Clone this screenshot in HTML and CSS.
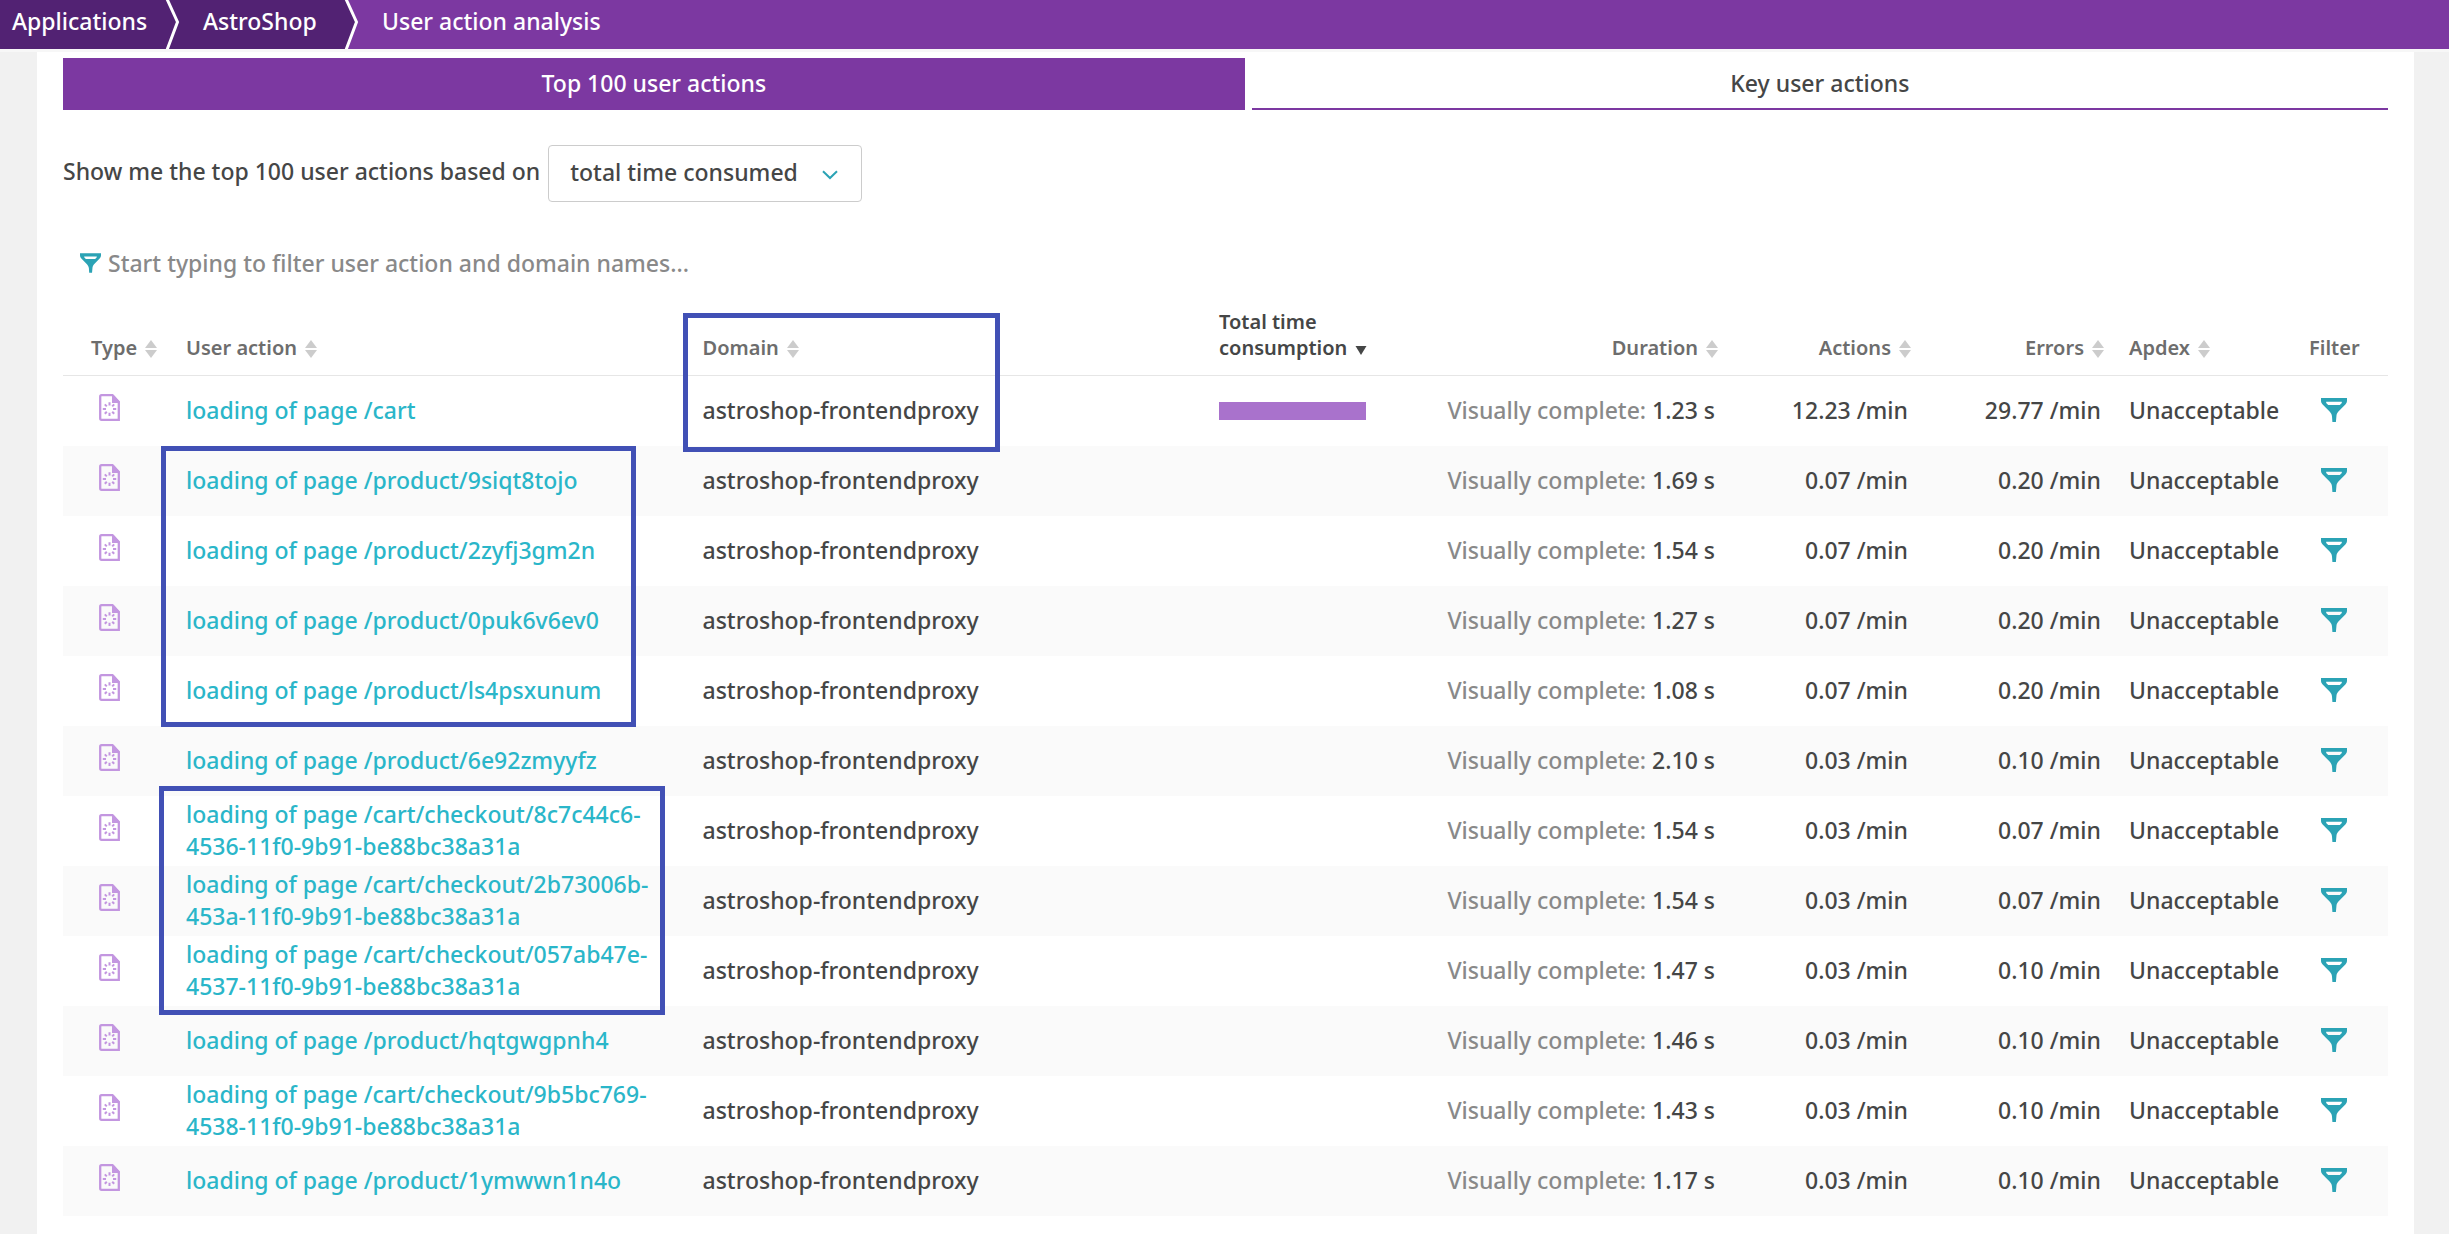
FILE: index.html
```html
<!DOCTYPE html>
<html lang="en">
<head>
<meta charset="utf-8">
<meta name="viewport" content="width=device-width, initial-scale=1">
<title>User action analysis</title>
<link rel="stylesheet" href="styles.css">
</head>
<body>
<svg class="sprite" aria-hidden="true">
  <symbol id="funnel" viewBox="0 0 26 24">
    <path fill-rule="evenodd" d="M0 0H26V2.5C26 4 25.6 5 24.6 6.2L17.4 13.6C16 15.2 15.5 16.6 15.4 18.6L14.9 24H11.4L11 18.6C10.8 16.6 10 15.2 8.6 13.6L1.4 6.2C.4 5 0 4 0 2.5ZM5.2 3.8V5L7.2 7H18.8L20.8 5V3.8Z"/>
  </symbol>
  <symbol id="page-load" viewBox="0 0 21 27">
    <path fill="none" stroke="currentColor" stroke-width="2.3" d="M2.5 1.2H13.5L19.8 8V25.8H2.5Q1.2 25.8 1.2 24.3V2.7Q1.2 1.2 2.5 1.2Z"/>
    <path fill="currentColor" d="M13 1H14.5L20.5 7.5V9H13Z"/>
    <path fill="none" stroke="currentColor" stroke-width="2" d="M10.5 8.2V11.4M10.5 18.8V22M3.8 15.1H7M14 15.1H17.2M5.8 10.4L7.8 12.4M13.2 17.8L15.2 19.8M5.8 19.8L7.8 17.8M13.2 12.4L15.2 10.4"/>
  </symbol>
  <symbol id="sort" viewBox="0 0 12 18">
    <path d="M6 0L12 8H0ZM6 18L12 10H0Z"/>
  </symbol>
</svg>

<nav class="crumbs" aria-label="Breadcrumb">
  <a class="crumb crumb-first" href="#">Applications<svg class="crumb-edge" viewBox="0 0 16 49" aria-hidden="true"><path class="edge-fill" d="M0 0H2L14 22L2 49H0Z"/><path class="edge-line" d="M2 -1L12.5 22L2 50"/></svg></a>
  <a class="crumb crumb-second" href="#">AstroShop<svg class="crumb-edge" viewBox="0 0 16 49" aria-hidden="true"><path class="edge-fill" d="M0 0H2L12 22L2 49H0Z"/><path class="edge-line" d="M2 -1L12.5 22L2 50"/></svg></a>
  <span class="crumb crumb-current">User action analysis</span>
</nav>

<main class="panel">
  <div class="tabs">
    <button class="tab tab-active" type="button">Top 100 user actions</button>
    <button class="tab" type="button">Key user actions</button>
  </div>

  <div class="basis">
    <label for="basis">Show me the top 100 user actions based on</label>
    <div class="select-box">
      <select id="basis"><option>total time consumed</option></select>
      <svg class="chevron" viewBox="0 0 16 10" aria-hidden="true"><path d="M1 1.2L8 8L15 1.2"/></svg>
    </div>
  </div>

  <div class="filter-row">
    <svg class="funnel-small" aria-hidden="true"><use href="#funnel"/></svg>
    <input type="text" aria-label="Filter user actions" placeholder="Start typing to filter user action and domain names...">
  </div>

  <table class="actions">
    <colgroup><col class="c-type"><col><col><col class="c-total"><col class="c-duration"><col class="c-rate"><col class="c-rate"><col class="c-apdex"><col class="c-filter"></colgroup>
    <thead>
      <tr>
        <th class="type"><button type="button">Type<svg class="sort"><use href="#sort"/></svg></button></th>
        <th><button type="button">User action<svg class="sort"><use href="#sort"/></svg></button></th>
        <th><button type="button">Domain<svg class="sort"><use href="#sort"/></svg></button></th>
        <th><button class="sorted" type="button"><span>Total time<br>consumption</span><svg class="sort-down" viewBox="0 0 12 9"><path d="M.5 0H11.5L6 9Z"/></svg></button></th>
        <th class="num"><button type="button">Duration<svg class="sort"><use href="#sort"/></svg></button></th>
        <th class="num"><button type="button">Actions<svg class="sort"><use href="#sort"/></svg></button></th>
        <th class="num"><button type="button">Errors<svg class="sort"><use href="#sort"/></svg></button></th>
        <th><button type="button">Apdex<svg class="sort"><use href="#sort"/></svg></button></th>
        <th>Filter</th>
      </tr>
    </thead>
    <tbody>
      <tr><td class="type"><svg class="page-load"><use href="#page-load"/></svg></td><td><a href="#">loading of page /cart</a></td><td>astroshop-frontendproxy</td><td class="share"><div class="bar"></div></td><td class="num"><span class="metric">Visually complete:</span> 1.23 s</td><td class="num">12.23 /min</td><td class="num">29.77 /min</td><td>Unacceptable</td><td class="filter"><button type="button" aria-label="Filter"><svg class="funnel"><use href="#funnel"/></svg></button></td></tr>
      <tr><td class="type"><svg class="page-load"><use href="#page-load"/></svg></td><td><a href="#">loading of page /product/9siqt8tojo</a></td><td>astroshop-frontendproxy</td><td></td><td class="num"><span class="metric">Visually complete:</span> 1.69 s</td><td class="num">0.07 /min</td><td class="num">0.20 /min</td><td>Unacceptable</td><td class="filter"><button type="button" aria-label="Filter"><svg class="funnel"><use href="#funnel"/></svg></button></td></tr>
      <tr><td class="type"><svg class="page-load"><use href="#page-load"/></svg></td><td><a href="#">loading of page /product/2zyfj3gm2n</a></td><td>astroshop-frontendproxy</td><td></td><td class="num"><span class="metric">Visually complete:</span> 1.54 s</td><td class="num">0.07 /min</td><td class="num">0.20 /min</td><td>Unacceptable</td><td class="filter"><button type="button" aria-label="Filter"><svg class="funnel"><use href="#funnel"/></svg></button></td></tr>
      <tr><td class="type"><svg class="page-load"><use href="#page-load"/></svg></td><td><a href="#">loading of page /product/0puk6v6ev0</a></td><td>astroshop-frontendproxy</td><td></td><td class="num"><span class="metric">Visually complete:</span> 1.27 s</td><td class="num">0.07 /min</td><td class="num">0.20 /min</td><td>Unacceptable</td><td class="filter"><button type="button" aria-label="Filter"><svg class="funnel"><use href="#funnel"/></svg></button></td></tr>
      <tr><td class="type"><svg class="page-load"><use href="#page-load"/></svg></td><td><a href="#">loading of page /product/ls4psxunum</a></td><td>astroshop-frontendproxy</td><td></td><td class="num"><span class="metric">Visually complete:</span> 1.08 s</td><td class="num">0.07 /min</td><td class="num">0.20 /min</td><td>Unacceptable</td><td class="filter"><button type="button" aria-label="Filter"><svg class="funnel"><use href="#funnel"/></svg></button></td></tr>
      <tr><td class="type"><svg class="page-load"><use href="#page-load"/></svg></td><td><a href="#">loading of page /product/6e92zmyyfz</a></td><td>astroshop-frontendproxy</td><td></td><td class="num"><span class="metric">Visually complete:</span> 2.10 s</td><td class="num">0.03 /min</td><td class="num">0.10 /min</td><td>Unacceptable</td><td class="filter"><button type="button" aria-label="Filter"><svg class="funnel"><use href="#funnel"/></svg></button></td></tr>
      <tr><td class="type"><svg class="page-load"><use href="#page-load"/></svg></td><td><a href="#">loading of page /cart/checkout/8c7c44c6-4536-11f0-9b91-be88bc38a31a</a></td><td>astroshop-frontendproxy</td><td></td><td class="num"><span class="metric">Visually complete:</span> 1.54 s</td><td class="num">0.03 /min</td><td class="num">0.07 /min</td><td>Unacceptable</td><td class="filter"><button type="button" aria-label="Filter"><svg class="funnel"><use href="#funnel"/></svg></button></td></tr>
      <tr><td class="type"><svg class="page-load"><use href="#page-load"/></svg></td><td><a href="#">loading of page /cart/checkout/2b73006b-453a-11f0-9b91-be88bc38a31a</a></td><td>astroshop-frontendproxy</td><td></td><td class="num"><span class="metric">Visually complete:</span> 1.54 s</td><td class="num">0.03 /min</td><td class="num">0.07 /min</td><td>Unacceptable</td><td class="filter"><button type="button" aria-label="Filter"><svg class="funnel"><use href="#funnel"/></svg></button></td></tr>
      <tr><td class="type"><svg class="page-load"><use href="#page-load"/></svg></td><td><a href="#">loading of page /cart/checkout/057ab47e-4537-11f0-9b91-be88bc38a31a</a></td><td>astroshop-frontendproxy</td><td></td><td class="num"><span class="metric">Visually complete:</span> 1.47 s</td><td class="num">0.03 /min</td><td class="num">0.10 /min</td><td>Unacceptable</td><td class="filter"><button type="button" aria-label="Filter"><svg class="funnel"><use href="#funnel"/></svg></button></td></tr>
      <tr><td class="type"><svg class="page-load"><use href="#page-load"/></svg></td><td><a href="#">loading of page /product/hqtgwgpnh4</a></td><td>astroshop-frontendproxy</td><td></td><td class="num"><span class="metric">Visually complete:</span> 1.46 s</td><td class="num">0.03 /min</td><td class="num">0.10 /min</td><td>Unacceptable</td><td class="filter"><button type="button" aria-label="Filter"><svg class="funnel"><use href="#funnel"/></svg></button></td></tr>
      <tr><td class="type"><svg class="page-load"><use href="#page-load"/></svg></td><td><a href="#">loading of page /cart/checkout/9b5bc769-4538-11f0-9b91-be88bc38a31a</a></td><td>astroshop-frontendproxy</td><td></td><td class="num"><span class="metric">Visually complete:</span> 1.43 s</td><td class="num">0.03 /min</td><td class="num">0.10 /min</td><td>Unacceptable</td><td class="filter"><button type="button" aria-label="Filter"><svg class="funnel"><use href="#funnel"/></svg></button></td></tr>
      <tr><td class="type"><svg class="page-load"><use href="#page-load"/></svg></td><td><a href="#">loading of page /product/1ymwwn1n4o</a></td><td>astroshop-frontendproxy</td><td></td><td class="num"><span class="metric">Visually complete:</span> 1.17 s</td><td class="num">0.03 /min</td><td class="num">0.10 /min</td><td>Unacceptable</td><td class="filter"><button type="button" aria-label="Filter"><svg class="funnel"><use href="#funnel"/></svg></button></td></tr>
    </tbody>
  </table>

  <div class="callout callout-domain"></div>
  <div class="callout callout-products"></div>
  <div class="callout callout-checkouts"></div>
</main>
</body>
</html>
```
FILE: styles.css
```css
* {
  box-sizing: border-box;
}

body {
  margin: 0;
  min-height: 100vh;
  display: flex;
  flex-direction: column;
  background: #f1f1f1;
  color: #454646;
  font: 500 23px/32px "Noto Sans", sans-serif;
}

button,
input,
select {
  font: inherit;
  color: inherit;
  background: none;
  border: 0;
  padding: 0;
  margin: 0;
}

a {
  color: #2ab6c9;
  text-decoration: none;
}

.sprite {
  display: none;
}

/* Breadcrumb bar */
.crumbs {
  display: flex;
  background: #7c38a1;
  border-bottom: 3px solid #f7f7f7;
  box-sizing: content-box;
  height: 49px;
}

.crumb {
  position: relative;
  padding: 5px 0 12px 26px;
  color: #fff;
}

.crumb-first,
.crumb-second {
  background: #522273;
}

.crumb-first {
  width: 165px;
  padding-left: 12px;
  z-index: 2;
}

.crumb-second {
  width: 179px;
  padding-left: 38px;
  z-index: 1;
}

.crumb-current {
  padding-left: 38px;
}

.crumb-edge {
  position: absolute;
  top: 0;
  left: 100%;
  width: 16px;
  height: 49px;
}

.edge-fill {
  fill: #522273;
}

.edge-line {
  fill: none;
  stroke: #fff;
  stroke-width: 3;
}

/* Content panel */
.panel {
  position: relative;
  flex: 1;
  margin: 0 35px 0 37px;
  padding: 6px 26px 18px;
  background: #fff;
}

.tabs {
  display: flex;
  gap: 7px;
}

.tab {
  flex: 25 1 0;
  height: 52px;
  border-bottom: 2px solid #7c38a1;
}

.tab-active {
  flex-grow: 26;
  background: #7c38a1;
  color: #fff;
}

.basis {
  display: flex;
  align-items: center;
  gap: 8px;
  margin-top: 35px;
}

.basis label {
  padding-bottom: 6px;
}

.select-box {
  position: relative;
}

.select-box select {
  appearance: none;
  width: 314px;
  height: 57px;
  padding: 0 52px 4px 21px;
  border: 1px solid #ccc;
  border-radius: 4px;
  background: #fff;
}

.chevron {
  position: absolute;
  right: 24px;
  top: 25px;
  width: 16px;
  height: 10px;
  fill: none;
  stroke: #2ba3b5;
  stroke-width: 2;
  pointer-events: none;
}

.filter-row {
  display: flex;
  align-items: center;
  gap: 7px;
  margin-top: 41px;
  padding-left: 17px;
}

.filter-row input {
  flex: 1;
  height: 40px;
  outline: 0;
}

.filter-row input::placeholder {
  color: #898989;
  opacity: 1;
}

.funnel-small {
  width: 21px;
  height: 20px;
  fill: #2ba3b5;
}

/* User action table */
.actions {
  width: 100%;
  table-layout: fixed;
  border-collapse: separate;
  border-spacing: 0;
}

.c-type { width: 109px; }
.c-total { width: 175px; }
.c-duration { width: 349px; }
.c-rate { width: 193px; }
.c-apdex { width: 180px; }
.c-filter { width: 93px; }

.actions th {
  height: 93px;
  padding: 0 0 14px 14px;
  border-bottom: 1px solid #e6e6e6;
  vertical-align: bottom;
  text-align: left;
  font-size: 20px;
  line-height: 26px;
  font-weight: 600;
  color: #6d6d6d;
}

.actions th.type {
  padding-left: 28px;
}

.actions th.num {
  padding-right: 11px;
}

.actions th button {
  display: flex;
  align-items: flex-end;
  gap: 8px;
  text-align: left;
}

.actions th.num button {
  margin-left: auto;
}

.actions th .sorted {
  color: #454646;
}

.sort {
  width: 12px;
  height: 18px;
  margin-bottom: 3px;
  fill: #ccc;
}

.sort-down {
  width: 12px;
  height: 9px;
  margin-bottom: 6px;
  fill: #454646;
}

.actions td {
  height: 70px;
  padding: 0 14px 2px;
  vertical-align: middle;
}

.actions td.type {
  padding: 0 0 7px 36px;
}

.actions td.share {
  padding-bottom: 0;
}

.actions td.num {
  text-align: right;
  white-space: nowrap;
}

.actions tbody tr:nth-child(even) {
  background: #fafafa;
}

.metric {
  color: #898989;
}

.page-load {
  display: block;
  width: 21px;
  height: 27px;
  color: #c396e0;
}

.bar {
  width: 147px;
  height: 18px;
  background: #a972cc;
}

.actions td.filter {
  padding-left: 26px;
}

.filter button,
.funnel {
  display: block;
}

.funnel {
  width: 26px;
  height: 24px;
  fill: #2ba3b5;
}

/* Highlight frames drawn over the table */
.callout {
  position: absolute;
  border: 5px solid #4150b5;
  pointer-events: none;
}

.callout-domain {
  left: 646px;
  top: 261px;
  width: 317px;
  height: 139px;
}

.callout-products {
  left: 124px;
  top: 394px;
  width: 475px;
  height: 281px;
}

.callout-checkouts {
  left: 122px;
  top: 734px;
  width: 506px;
  height: 229px;
}
```
